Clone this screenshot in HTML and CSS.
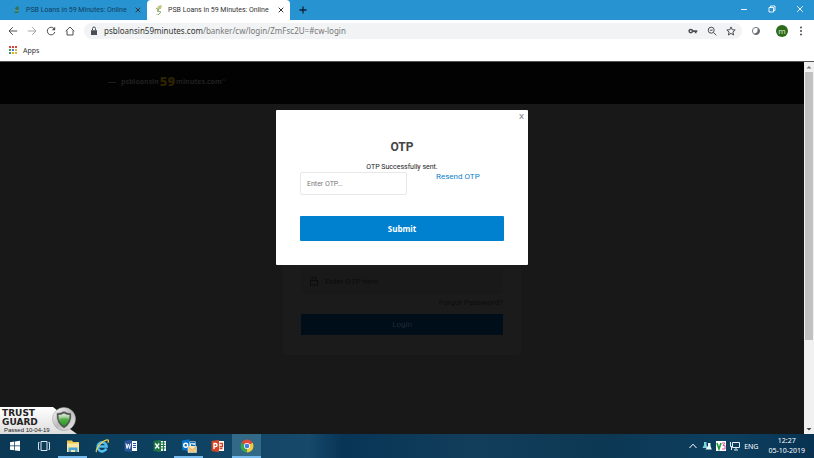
FILE: index.html
```html
<!DOCTYPE html>
<html lang="en">
<head>
<meta charset="utf-8">
<title>PSB Loans in 59 Minutes: Online</title>
<link rel="stylesheet" href="styles.css">
</head>
<body>
<header class="browser">
  <div class="tabs">
    <div class="tab">
      <svg class="fav" viewBox="0 0 8 10"><path d="M2 3l3-2 1 3-3 2zM1 7l5-1-1 2H2z" fill="#35704f"/><path d="M2 5l3 1" stroke="#8a914a"/></svg>
      <span class="tab-title">PSB Loans in 59 Minutes: Online</span>
      <button class="close" aria-label="Close tab"><svg viewBox="0 0 6 6"><path d="M.7.7l4.600 4.600M5.300.7L.7 5.300"/></svg></button>
    </div>
    <div class="tab active">
      <svg class="fav" viewBox="0 0 8 10"><path d="M3 1l4-1-1 4-4 1z" fill="#c3c87c"/><path d="M1 3l3 2-2 1 4 1-3 3H1" fill="none" stroke="#8aa875"/></svg>
      <span class="tab-title">PSB Loans in 59 Minutes: Online</span>
      <button class="close" aria-label="Close tab"><svg viewBox="0 0 6 6"><path d="M.7.7l4.600 4.600M5.300.7L.7 5.300"/></svg></button>
    </div>
    <button class="new-tab" aria-label="New tab"><svg viewBox="0 0 8 8"><path d="M4 .5v7M.5 4h7"/></svg></button>
    <div class="window-controls">
      <button aria-label="Minimize"><svg viewBox="0 0 8 8"><path d="M1 4.500h6"/></svg></button>
      <button aria-label="Restore"><svg viewBox="0 0 8 8"><path d="M1 2.500h4.500V7H1zM2.500 2.500V1H7v4.500H5.500"/></svg></button>
      <button aria-label="Close"><svg viewBox="0 0 8 8"><path d="M1.200 1.200l5.600 5.600M6.800 1.200L1.200 6.800"/></svg></button>
    </div>
  </div>
  <div class="toolbar">
    <button aria-label="Back"><svg viewBox="0 0 10 10"><path d="M9.200 5H1.200M4.800 1.200L1 5l3.800 3.800"/></svg></button>
    <button class="dim" aria-label="Forward"><svg viewBox="0 0 10 10"><path d="M.8 5h8M5.200 1.200L9 5 5.200 8.800"/></svg></button>
    <button aria-label="Reload"><svg viewBox="0 0 10 10"><path d="M8.300 3A3.800 3.800 0 1 0 8.800 6"/><path d="M9.200.8v3.400H5.800z" class="solid"/></svg></button>
    <button aria-label="Home"><svg viewBox="0 0 10 10"><path d="M.7 5.200L5 1l4.300 4.200M2 4.500V9h6V4.500"/></svg></button>
    <div class="address">
      <svg viewBox="0 0 10 10"><path d="M2 4.200h6V9H2z" class="solid"/><path d="M3.500 4V2.500a1.500 1.500 0 0 1 3 0V4"/></svg>
      <p class="url"><strong>psbloansin59minutes.com</strong>/banker/cw/login/ZmFsc2U=#cw-login</p>
      <button aria-label="Saved passwords"><svg viewBox="0 0 10 10"><path d="M4.300 4.300h5v1.700h-.8v1.200H6.800V6H4.300z" class="solid"/><circle cx="2.800" cy="5.100" r="1.700" stroke-width="1.500"/></svg></button>
      <button aria-label="Zoom"><svg viewBox="0 0 10 10"><circle cx="4.200" cy="4.200" r="3"/><path d="M6.500 6.500L9.300 9.300M2.800 4.200h2.800"/></svg></button>
      <button aria-label="Bookmark"><svg viewBox="0 0 10 10"><path d="M5 .9l1.200 2.800 3 .3-2.300 2 .7 3L5 7.400 2.400 9l.7-3L.8 4l3-.3z"/></svg></button>
    </div>
    <button aria-label="Extension"><svg viewBox="0 0 10 10"><circle cx="5" cy="5" r="3.600" stroke="#777c81"/><path d="M8.600 5A3.600 3.600 0 0 1 3 8l2.200-1.200c1.500-.4 1.400-1.800 1.300-4.500 1.200.5 2 1.500 2.100 2.700z" fill="#62676c" stroke="none"/></svg></button>
    <button class="avatar" aria-label="Profile">m</button>
    <button aria-label="Menu"><svg viewBox="0 0 10 10"><g class="solid"><circle cx="5" cy="1.500" r="1"/><circle cx="5" cy="5" r="1"/><circle cx="5" cy="8.500" r="1"/></g></svg></button>
  </div>
  <nav class="bookmarks">
    <a href="#apps"><svg viewBox="0 0 8 8"><path fill="#d9453a" d="M0 0h2v2H0zM3 0h2v2H3zM6 0h2v2H6z"/><path fill="#3f9b54" d="M0 3h2v2H0z"/><path fill="#4680d8" d="M3 3h2v2H3z"/><path fill="#e2b033" d="M6 3h2v2H6zM3 6h2v2H3zM6 6h2v2H6z"/><path fill="#3f9b54" d="M0 6h2v2H0z"/></svg>Apps</a>
  </nav>
</header>

<main class="viewport">
  <div class="page">
    <div class="site-header">
      <div class="logo"><i></i><span>psbloansin</span><b>59</b><span>minutes.com</span><sup>™</sup></div>
    </div>
    <form class="login">
      <label class="field">
        <svg viewBox="0 0 10 10"><path d="M1.500 4.500h7V9h-7zM3 4V3a2 2 0 0 1 4 0v1"/></svg>
        <input type="text" placeholder="Enter OTP here" aria-label="Enter OTP here">
      </label>
      <a href="#forgot">Forgot Password?</a>
      <button type="button">Login</button>
    </form>
    <section class="dialog" role="dialog" aria-labelledby="otp-title">
      <button class="dismiss" aria-label="Close dialog">X</button>
      <h1 id="otp-title">OTP</h1>
      <p>OTP Successfully sent.</p>
      <div class="otp-row">
        <input type="text" placeholder="Enter OTP..." aria-label="Enter OTP">
        <a href="#resend">Resend OTP</a>
      </div>
      <button class="submit">Submit</button>
    </section>
    <div class="trust">
      <div class="trust-plate"><strong>TRUST</strong><strong>GUARD</strong><small>Passed 10-04-19</small></div>
      <svg viewBox="0 0 24 24"><defs><linearGradient id="ring" x2="1" y2="1"><stop stop-color="#fff"/><stop offset=".5" stop-color="#bcbcbc"/><stop offset="1" stop-color="#eee"/></linearGradient><linearGradient id="leaf" x2="0" y2="1"><stop stop-color="#e9f5e2"/><stop offset=".45" stop-color="#5aae4e"/><stop offset="1" stop-color="#219a1c"/></linearGradient></defs><circle cx="12" cy="12" r="11.500" fill="url(#ring)" stroke="#999" stroke-width=".5"/><path d="M4.500 6q4 0 7.500-2 3.500 2 7.500 2Q20.500 17 12 21.500 3.500 17 4.500 6z" fill="#555" stroke="#ddd" stroke-width=".6"/><path d="M6.500 8q3 0 5.500-1.600Q14.500 8 17.500 8 18 15.500 12 19 6 15.500 6.500 8z" fill="url(#leaf)"/><path d="M6.500 8q3 0 5.500-1.600Q14.500 8 17.500 8q0 2-.6 4Q11 9 7 13z" fill="#e4ece1" opacity=".3"/></svg>
    </div>
  </div>
  <div class="scrollbar">
    <svg viewBox="0 0 10 10"><path d="M2.500 6.500L5 4l2.500 2.500z" fill="#777"/></svg>
    <div class="track"><div class="thumb"></div></div>
    <svg viewBox="0 0 10 10"><path d="M2.500 4L5 6.500 7.500 4z" fill="#444"/></svg>
  </div>
</main>

<footer class="taskbar">
  <button aria-label="Start"><svg viewBox="0 0 16 16"><path fill="#fff" d="M3 4.200L7.300 3.600v4H3zM8 3.500l5-.7v4.800H8zM3 8.300h4.300v4L3 11.700zM8 8.300h5V13l-5-.6z"/></svg></button>
  <button aria-label="Task view"><svg viewBox="0 0 16 16" fill="none" stroke="#dbe7ee"><path d="M5 3.500h6v9H5zM3.500 4.500h-1v7h1M12.500 4.500h1v7h-1"/></svg></button>
  <button class="open" aria-label="File Explorer"><svg viewBox="0 0 16 16"><path fill="#f0c651" d="M2 2.500h5l1 1.500h6v10H2z"/><path fill="#fbe7a2" d="M2 5.500h12V14H2z"/><path fill="#4aa4d4" d="M3.500 9.500h9V14h-2.500v-2H6v2H3.500z"/></svg></button>
  <button aria-label="Internet Explorer"><svg viewBox="0 0 16 16" fill="none"><path d="M12.300 10.500A4.500 4.500 0 1 1 12.600 8.500H4.500" stroke="#52bdf0" stroke-width="2.600"/><path d="M2.600 14C.5 12.500 7 3 13 1.800c2-.2 1.500 2 .8 3" stroke="#f1cf46" stroke-width="1.200"/></svg></button>
  <button aria-label="Word"><svg viewBox="0 0 16 16"><path fill="#fff" d="M8 3h6v10H8z"/><path fill="#2a5699" d="M1.500 3L9 1.800v12.400L1.500 13z"/><path stroke="#2a5699" d="M10 5.500h3M10 7.500h3M10 9.500h3"/><path d="M3 5.500l1 5 1.300-4.500 1.300 4.500 1-5" fill="none" stroke="#fff"/></svg></button>
  <button aria-label="Excel"><svg viewBox="0 0 16 16"><path fill="#fff" d="M8 3h6v10H8z"/><path fill="#207347" d="M1.500 3L9 1.800v12.400L1.500 13z"/><path stroke="#207347" stroke-width="1.200" d="M9 5h4.500M9 7.500h4.500M9 10h4.500M11.500 3v10"/><path d="M3.200 5.500l4 5M7.200 5.500l-4 5" stroke="#fff" stroke-width="1.300"/></svg></button>
  <button class="open" aria-label="Outlook"><svg viewBox="0 0 16 16"><path fill="#fff" d="M8 3.500h6.500V10H8z"/><path fill="#0873c5" d="M1 2.500l7.500-1.200v12L1 12zM9 4h5v1.200H9zM10 6l4 1v2l-4-1z"/><circle cx="4.700" cy="7.200" r="2" fill="none" stroke="#fff" stroke-width="1.400"/><path fill="#f3c77c" stroke="#fff" stroke-width=".5" d="M7 8.500h8.500v6H7z"/><path d="M7 8.500l4.200 3.500 4.300-3.500" fill="#ffe5b2" stroke="#c8934a" stroke-width=".6"/></svg></button>
  <button aria-label="PowerPoint"><svg viewBox="0 0 16 16"><path fill="#fff" d="M8 3h6v10H8z"/><path fill="#d04525" d="M1.500 3L9 1.800v12.400L1.500 13z"/><path d="M4 11V5.500h1.500a1.500 1.500 0 0 1 0 3.200H4" fill="none" stroke="#fff" stroke-width="1.300"/><path d="M9.500 5.500h3v3h-3M9.500 10.500h3" fill="none" stroke="#d04525" stroke-width="1.300"/></svg></button>
  <button class="open current" aria-label="Chrome"><svg viewBox="0 0 16 16"><path d="M8 8L2.400 4.800A6.500 6.500 0 0 1 13.600 4.800z" fill="#e04b3c"/><path d="M8 8l5.600-3.200A6.500 6.500 0 0 1 8 14.500z" fill="#f4ca3c"/><path d="M8 8v6.500A6.500 6.500 0 0 1 2.400 4.800z" fill="#38a555"/><circle cx="8" cy="8" r="3" fill="#fff"/><circle cx="8" cy="8" r="2.300" fill="#437fe0"/></svg></button>
  <div class="tray">
    <svg viewBox="0 0 10 10"><path d="M1.500 7L5 3.200 8.500 7" fill="none" stroke="#fff"/></svg>
    <svg viewBox="0 0 10 10"><path fill="#7ed4d8" d="M2 1h2.500v3L6 7H.5L2 4z"/><path fill="#e7fafa" d="M6 2h2.500v3l1.300 3.500H3.500L6 5z"/></svg>
    <svg viewBox="0 0 10 10"><path fill="#fff" d="M0 0h10v10H0z"/><path d="M1 2l2 6 2-6" fill="none" stroke="#209c3a" stroke-width="1.600"/><path d="M6 2h3L7 4.500h2V8H6" fill="none" stroke="#d4549c"/></svg>
    <svg viewBox="0 0 10 10" fill="none" stroke="#e6eef3"><path d="M2.500 1.500h7v5h-7zM6 6.500v2M4 9h4M.5 1v4.500h2M1.500 5.500V9"/></svg>
    <span>ENG</span>
    <time>12:27<br>05-10-2019</time>
  </div>
</footer>
</body>
</html>
```

FILE: styles.css
```css
* { box-sizing: border-box; }
body {
  margin: 0;
  min-height: 100vh;
  display: flex;
  flex-direction: column;
  overflow: hidden;
  font-family: "Open Sans", "Noto Sans", sans-serif;
  font-size: 8px;
  color: #333;
}
button { font: inherit; color: inherit; border: 0; padding: 0; background: none; }
input { font: inherit; min-width: 0; }
a { text-decoration: none; color: inherit; }
p, h1 { margin: 0; }
svg { display: block; flex: none; }

.tabs { display: flex; height: 20px; background: #2793d1; }
.tab {
  width: 143px;
  display: flex;
  align-items: center;
  padding: 0 6px 0 13px;
  color: #12405f;
}
.tab.active { padding-left: 8px; background: #fff; color: #333; border-radius: 4px 4px 0 0; }
.tab:first-child { width: 147px; }
.fav { width: 8px; height: 10px; margin-right: 5px; }
.tab-title { flex: 1; white-space: nowrap; font-family: Roboto, sans-serif; font-size: 7px; }
.close svg { width: 6px; height: 6px; fill: none; stroke: #333; }
.new-tab { margin-left: 9px; }
.new-tab svg { width: 8px; height: 8px; stroke: #123; stroke-width: 1.3; }
.window-controls { display: flex; gap: 20px; margin-left: auto; padding-right: 10px; }
.window-controls svg { width: 8px; height: 8px; margin-bottom: 3px; fill: none; stroke: #fff; stroke-width: .9; }

.toolbar { display: flex; align-items: center; gap: 9px; height: 21px; padding: 0 8px; background: #fff; }
.toolbar svg { width: 10px; height: 10px; fill: none; stroke: #4b4f53; }
.toolbar .solid { fill: #4b4f53; stroke: none; }
.toolbar .dim { opacity: .5; }
.address { flex: 1; display: flex; align-items: center; gap: 9px; height: 16px; padding: 0 6px 0 5px; border-radius: 8px; background: #f1f3f4; }
.url { flex: 1; margin-left: -4px; font-family: "Noto Sans", sans-serif; font-size: 8px; white-space: nowrap; color: #777; }
.url strong { font-weight: 400; color: #333; }
.toolbar .avatar { width: 12px; height: 12px; line-height: 12px; margin-left: 6px; margin-right: -1px; border-radius: 50%; background: #2c6b18; color: #e4eddf; }
.bookmarks { display: flex; align-items: center; height: 20px; padding: 0 9px 2px; background: #fff; }
.bookmarks a { display: flex; align-items: center; gap: 6px; font-family: "Noto Sans", sans-serif; font-size: 7px; }
.bookmarks svg { width: 8px; height: 8px; }

.viewport { flex: 1; display: flex; border-top: 1px solid #555; background: #181818; }
.page { flex: 1; position: relative; display: flex; flex-direction: column; align-items: center; }
.site-header { align-self: stretch; height: 42px; padding: 10px 108px; background: #020202; }
.logo { display: flex; align-items: center; height: 18px; color: #202020; font-size: 7px; font-weight: 700; }
.logo i { width: 8px; height: 4px; margin-right: 5px; border-bottom: 1px solid #1d1d1d; }
.logo b { margin: 0 1px; font-size: 13px; color: #2c2200; }
.logo sup { font-size: 5px; }

.login { width: 238px; display: flex; flex-direction: column; padding: 110px 18px 20px; margin-top: 54px; border-radius: 4px; background: #1b1b1b; font-family: Roboto, sans-serif; color: #0c0c0c; }
.login .field { display: flex; align-items: center; gap: 4px; height: 26px; padding: 0 8px; background: #191919; }
.login .field svg { width: 10px; height: 10px; fill: none; stroke: #0c0c0c; }
.login input { flex: 1; border: 0; background: none; font-size: 8px; }
.login input::placeholder { color: #0c0c0c; }
.login a { align-self: flex-end; line-height: 18px; margin-bottom: 2px; font-size: 8px; }
.login button { height: 21px; background: #000e19; color: #1f2b34; font-size: 8px; }

.dialog {
  position: absolute;
  top: 48px;
  width: 252px;
  display: flex;
  flex-direction: column;
  padding: 29px 24px 24px;
  border-radius: 1px;
  background: #fff;
  font-family: Roboto, sans-serif;
  text-align: center;
}
.dismiss { position: absolute; top: 2px; right: 4px; line-height: 10px; color: #777; }
.dialog h1 { font-size: 12px; line-height: 16px; font-weight: 700; color: #444; }
.dialog p { margin-top: 7px; font-size: 7px; line-height: 10px; color: #222; }
.otp-row { display: flex; gap: 29px; }
.otp-row input { width: 107px; height: 23px; padding: 0 6px; border: 1px solid #e8e8e8; border-radius: 2px; background: #fff; font-size: 7px; }
.otp-row input::placeholder { color: #777; }
.otp-row a { font-size: 8px; line-height: 10px; color: #0d7fc9; }
.submit { height: 25px; margin-top: 21px; border-radius: 1px; background: #0081cf; color: #fff; font-family: "Open Sans", sans-serif; font-weight: 700; }

.trust { position: absolute; left: 0; bottom: 0; display: flex; align-items: flex-start; }
.trust-plate { width: 77px; height: 27px; padding: 2px 2px 0; background: linear-gradient(#fff, #ddd); color: #222; clip-path: polygon(0 0, 53px 0, 58px 4px, 70px 22px, 77px 27px, 0 27px); }
.trust strong { display: block; font-family: "DejaVu Sans", sans-serif; font-size: 9px; line-height: 9px; }
.trust small { display: block; padding-left: 2px; font-family: "Liberation Sans", sans-serif; font-size: 6px; line-height: 7px; white-space: nowrap; }
.trust svg { position: relative; width: 24px; height: 24px; margin-left: -25px; }

.scrollbar { width: 10px; display: flex; flex-direction: column; background: #f1f1f1; }
.scrollbar svg { width: 10px; height: 10px; }
.track { flex: 1; padding: 0 1px; }
.thumb { height: 76%; background: #c1c1c1; }

.taskbar { display: flex; height: 24px; background: linear-gradient(90deg, #0a3854, #0d4161 20%, #16496a 38%, #083556 42%, #123e5b 58%, #0c3854 75%, #0d3f5f 90%, #073252); color: #fff; }
.taskbar button { width: 29px; display: flex; align-items: center; justify-content: center; border-bottom: 2px solid transparent; }
.taskbar button svg { width: 16px; height: 16px; margin-top: 2px; }
.taskbar .open { border-bottom-color: #76b9ed; }
.taskbar .current { background: #316987; }
.tray { display: flex; align-items: center; gap: 4px; margin-left: auto; padding-right: 9px; font-family: "Noto Sans", sans-serif; font-size: 7px; }
.tray svg { width: 10px; height: 10px; }
.tray time { margin-left: 6px; line-height: 10px; text-align: center; }
```
